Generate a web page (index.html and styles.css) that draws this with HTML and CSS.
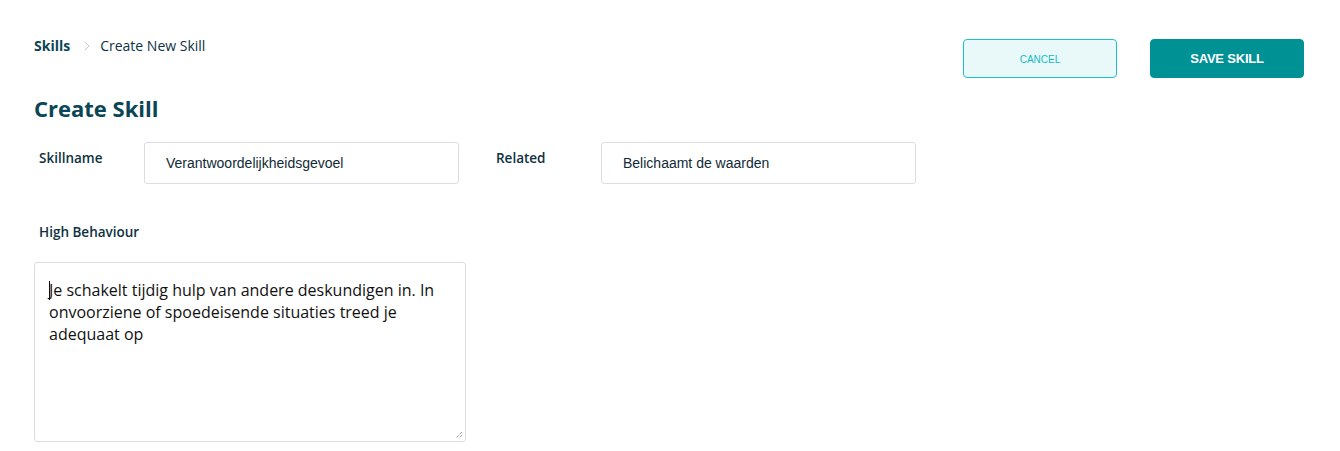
FILE: index.html
```html
<!DOCTYPE html>
<html>
<head>
<meta charset="utf-8">
<link rel="stylesheet" href="styles.css">
</head>
<body>
<div class="page">
  <div class="top">
    <div class="crumbs">
      <span class="crumb-root">Skills</span>
      <svg class="chev" width="8" height="10" viewBox="0 0 8 10"><path d="M2 1 L6 5 L2 9" fill="none" stroke="#c4c8cc" stroke-width="1"/></svg>
      <span class="crumb-cur">Create New Skill</span>
    </div>
    <div class="actions">
      <button class="btn btn-cancel">CANCEL</button>
      <button class="btn btn-save">SAVE SKILL</button>
    </div>
  </div>
  <h1 class="title">Create Skill</h1>
  <div class="row">
    <label class="lbl lbl-name">Skillname</label>
    <div class="input">Verantwoordelijkheidsgevoel</div>
    <label class="lbl lbl-rel">Related</label>
    <div class="input">Belichaamt de waarden</div>
  </div>
  <div class="lbl lbl-high">High Behaviour</div>
  <div class="textarea"><span class="caret"></span>Je schakelt tijdig hulp van andere deskundigen in. In onvoorziene of spoedeisende situaties treed je adequaat op
    <svg class="grip" width="8" height="8" viewBox="0 0 8 8"><path d="M7 1 L1 7 M7 4 L4 7" stroke="#777" stroke-width="1" stroke-dasharray="1 1"/></svg>
  </div>
</div>
</body>
</html>
```
FILE: styles.css
```css
* { box-sizing: border-box; }
html, body { margin: 0; padding: 0; background: #fff; }
body { font-family: "Open Sans", sans-serif; color: #0b3f4f; }
.page { padding: 39px 36px 0 34px; width: 1340px; }
.top { display: flex; justify-content: space-between; align-items: flex-start; }
.crumbs { display: flex; align-items: center; font-size: 14px; line-height: 14px; }
.crumb-root { font-weight: 700; color: #0b4556; }
.chev { margin: 0 9px 0 13px; }
.crumb-cur { color: #0e3344; }
.actions { display: flex; gap: 33px; }
.btn { width: 154px; height: 39px; border-radius: 4px; font-family: "Liberation Sans", Arial, sans-serif; cursor: pointer; }
.btn-cancel { background: #e9f8f8; border: 1px solid #1cc3cc; color: #12bcc6; font-size: 10px; padding-top: 2px; }
.btn-save { background: #009194; border: 1px solid #009194; color: #fff; font-size: 13px; font-weight: 700; letter-spacing: -0.2px; }
.title { margin: 15px 0 0 0; font-size: 22px; font-weight: 700; color: #0b4556; line-height: 30px; }
.row { display: flex; align-items: flex-start; margin-top: 19px; }
.lbl { font-size: 13.5px; font-weight: 600; color: #10323f; line-height: 18px; }
.lbl-name { width: 105px; margin-left: 5px; margin-top: 7px; }
.lbl-rel { width: 105px; margin-left: 37px; margin-top: 7px; }
.input { width: 315px; height: 42px; border: 1px solid #dcdce6; border-radius: 3px; padding: 0 0 0 21px; display: flex; align-items: center; font-family: "Liberation Sans", Arial, sans-serif; font-size: 14px; color: #112a36; }
.lbl-high { margin: 39px 0 0 5px; }
.textarea { position: relative; margin-top: 21px; width: 432px; height: 180px; border: 1px solid #dcdce6; border-radius: 3px; padding: 16px 14px; font-size: 16px; line-height: 22px; color: #111; }
.caret { display: inline-block; width: 1px; height: 19px; background: #111; vertical-align: -4px; margin-right: -1px; }
.grip { position: absolute; right: 2px; bottom: 2px; }
```
